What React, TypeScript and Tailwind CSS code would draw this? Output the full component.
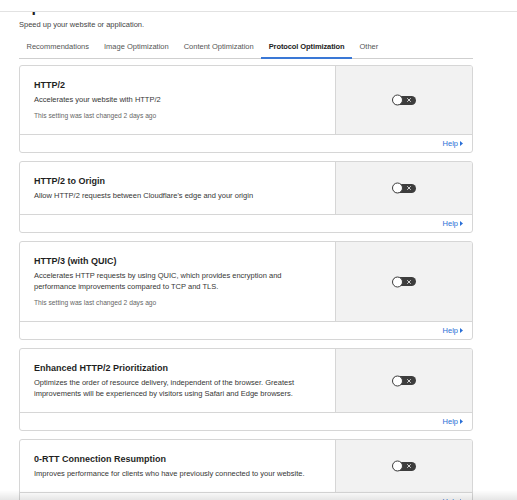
import type { ReactNode } from "react";

type Setting = {
  title: string;
  desc: ReactNode;
  changed?: boolean;
};

const tabs = [
  "Recommendations",
  "Image Optimization",
  "Content Optimization",
  "Protocol Optimization",
  "Other",
];

const settings: Setting[] = [
  { title: "HTTP/2", desc: "Accelerates your website with HTTP/2", changed: true },
  { title: "HTTP/2 to Origin", desc: "Allow HTTP/2 requests between Cloudflare's edge and your origin" },
  {
    title: "HTTP/3 (with QUIC)",
    desc: "Accelerates HTTP requests by using QUIC, which provides encryption and performance improvements compared to TCP and TLS.",
    changed: true,
  },
  {
    title: "Enhanced HTTP/2 Prioritization",
    desc: "Optimizes the order of resource delivery, independent of the browser. Greatest improvements will be experienced by visitors using Safari and Edge browsers.",
  },
  {
    title: "0-RTT Connection Resumption",
    desc: "Improves performance for clients who have previously connected to your website.",
  },
];

function Toggle() {
  return (
    <span className="relative inline-flex h-[9px] w-[23px] items-center rounded-full bg-[#3d3d3d]">
      <span className="absolute left-[-1px] top-1/2 h-[11px] w-[11px] -translate-y-1/2 rounded-full border border-[#3d3d3d] bg-white" />
      <svg className="absolute right-[5px] top-1/2 -translate-y-1/2" width="4" height="4" viewBox="0 0 4 4">
        <path d="M0.5 0.5L3.5 3.5M3.5 0.5L0.5 3.5" stroke="#e8e8e8" strokeWidth="0.9" strokeLinecap="round" />
      </svg>
    </span>
  );
}

function SettingCard({ s }: { s: Setting }) {
  return (
    <div className="overflow-hidden rounded-[3px] border border-[#d6d6d6] bg-white">
      <div className="flex">
        <div className="flex-1 pb-[13px] pl-[14px] pr-[20px] pt-[13px]">
          <div className="text-[9px] font-semibold leading-[12px] text-[#1f1f1f]">{s.title}</div>
          <p className="mt-[3px] max-w-[282px] text-[7.5px] leading-[11px] text-[#363636]">{s.desc}</p>
          {s.changed && (
            <p className="mt-[6px] text-[6.7px] leading-[10px] text-[#666]">
              This setting was last changed 2 days ago
            </p>
          )}
        </div>
        <div className="flex w-[137px] shrink-0 items-center justify-center border-l border-[#d6d6d6] bg-[#f2f2f2]">
          <Toggle />
        </div>
      </div>
      <div className="flex h-[18px] items-center justify-end border-t border-[#d6d6d6] pr-[9px]">
        <span className="text-[7.5px] font-medium leading-[10px] text-[#2a6fd6]">Help</span>
        <svg className="ml-[2px]" width="3" height="5" viewBox="0 0 3 5">
          <path d="M0 0L3 2.5L0 5Z" fill="#2a6fd6" />
        </svg>
      </div>
    </div>
  );
}

export default function App() {
  return (
    <div
      className="relative h-[500px] w-[517px] overflow-hidden bg-white"
      style={{ fontFamily: '"Liberation Sans", Arial, sans-serif' }}
    >
      {/* sticky bar edge, page heading scrolled beneath it */}
      <div className="h-[12px] border-b border-[#e2e2e2] bg-white" />
      <div className="ml-[19px] h-[3px] overflow-hidden">
        <div className="mt-[-13px] text-[16px] font-semibold leading-[16px] text-[#1f1f1f]">Optimization</div>
      </div>

      <div className="ml-[19px] w-[454px]">
        <p className="mt-[5px] text-[7.5px] leading-[10px] text-[#444]">Speed up your website or application.</p>

        <div className="mt-[4px] flex border-b border-[#cfcfcf]">
          {tabs.map((t) => {
            const active = t === "Protocol Optimization";
            return (
              <div
                key={t}
                className={
                  active
                    ? "-mb-px border-b-2 border-[#3a78d6] px-[7.5px] pb-[5px] pt-[8px] text-[7.5px] font-semibold leading-[10px] tracking-[-0.1px] text-[#222]"
                    : "-mb-px border-b-2 border-transparent px-[7.5px] pb-[5px] pt-[8px] text-[7.5px] leading-[10px] text-[#555]"
                }
              >
                {t}
              </div>
            );
          })}
        </div>

        <div className="mt-[6px] flex flex-col gap-[8px]">
          {settings.map((s) => (
            <SettingCard key={s.title} s={s} />
          ))}
        </div>
      </div>

      {/* bottom edge shading */}
      <div className="pointer-events-none absolute bottom-0 left-0 h-[10px] w-full bg-gradient-to-b from-transparent to-black/10" />
    </div>
  );
}
